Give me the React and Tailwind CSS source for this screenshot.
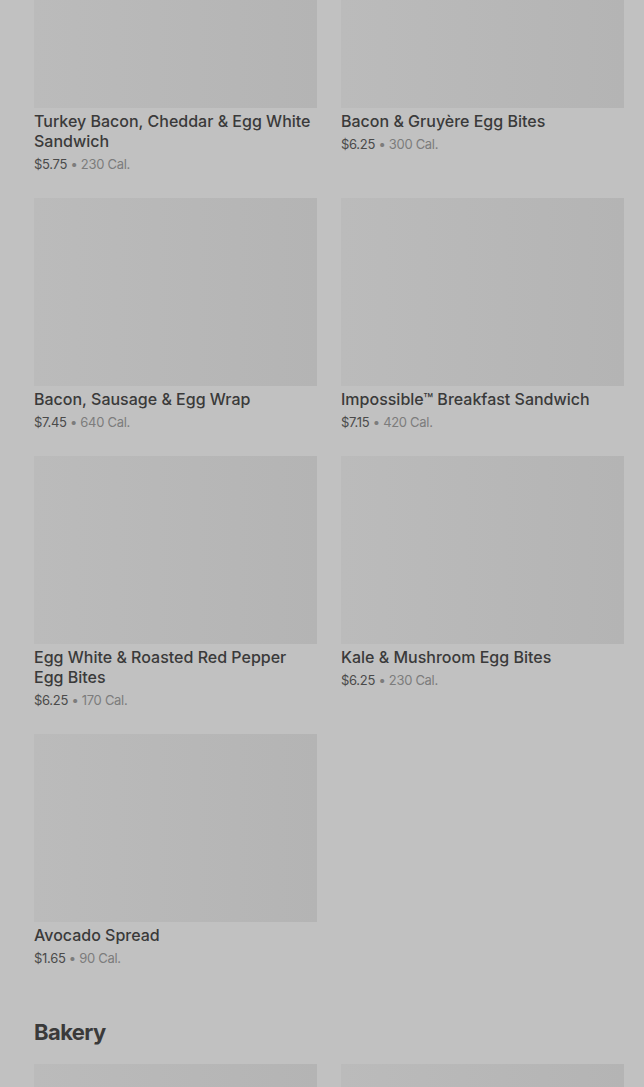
import React from "react";

const items = [
  { name: "Turkey Bacon, Cheddar & Egg White Sandwich", price: "$5.75", cal: "230 Cal." },
  { name: "Bacon & Gruyère Egg Bites", price: "$6.25", cal: "300 Cal." },
  { name: "Bacon, Sausage & Egg Wrap", price: "$7.45", cal: "640 Cal." },
  { name: "Impossible™ Breakfast Sandwich", price: "$7.15", cal: "420 Cal." },
  { name: "Egg White & Roasted Red Pepper Egg Bites", price: "$6.25", cal: "170 Cal." },
  { name: "Kale & Mushroom Egg Bites", price: "$6.25", cal: "230 Cal." },
  { name: "Avocado Spread", price: "$1.65", cal: "90 Cal." },
];

function Card({ item }) {
  return (
    <div className="flex flex-col pb-[25px]">
      <div className="h-[188px] w-full bg-gradient-to-r from-[#bbbbbb] to-[#b4b4b4]" />
      <div className="mt-[3px] text-[16px] leading-[20px] font-medium text-[#3a3a3a]">{item.name}</div>
      <div className="mt-[4px] text-[13px] leading-[18px] tracking-[-0.3px] text-[#4a4a4a]">
        {item.price}
        <span className="text-[#7c7c7c]"> • {item.cal}</span>
      </div>
    </div>
  );
}

export default function App() {
  return (
    <div
      className="w-[644px] h-[1087px] overflow-hidden bg-[#c1c1c1]"
      style={{ fontFamily: "Inter, Roboto, 'Noto Sans', sans-serif" }}
    >
      <div className="mt-[-80px] pl-[34px] pr-[20px]">
        <div className="grid grid-cols-2 gap-x-[24px]">
          {items.map((it, i) => (
            <Card key={i} item={it} />
          ))}
        </div>
        <h2 className="mt-[26px] text-[22px] leading-[28px] font-bold tracking-[-0.6px] text-[#3a3a3a]">Bakery</h2>
        <div className="mt-[18px] grid grid-cols-2 gap-x-[24px]">
          <div className="h-[188px] bg-gradient-to-r from-[#bbbbbb] to-[#b4b4b4]" />
          <div className="h-[188px] bg-gradient-to-r from-[#bbbbbb] to-[#b4b4b4]" />
        </div>
      </div>
    </div>
  );
}
